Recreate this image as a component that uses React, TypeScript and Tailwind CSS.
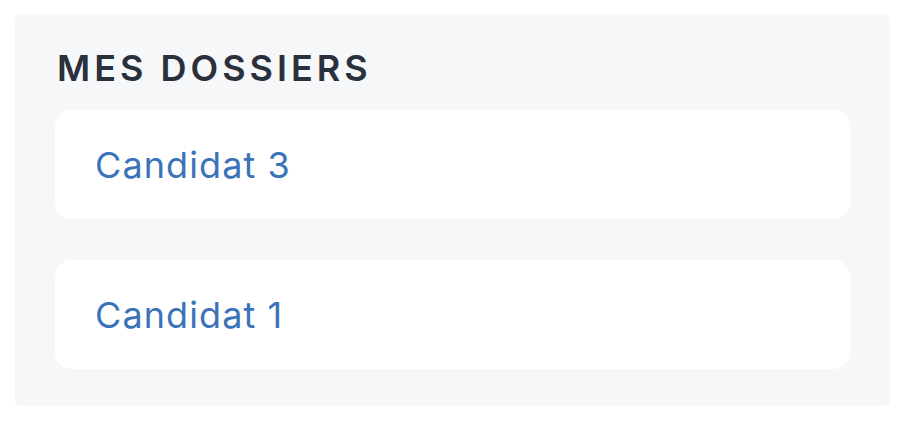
const dossiers = ["Candidat 3", "Candidat 1"];

export default function App() {
  return (
    <div className="min-h-screen bg-white pl-[15px] pt-[14px]" style={{ fontFamily: "Inter, 'Noto Sans', sans-serif" }}>
      <div className="flex w-[875px] flex-col rounded-[6px] bg-[#f6f7f9] px-[40px] pb-[37px] pt-[26px]">
        <h2 className="mb-[14px] pl-[2px] text-[36px] font-semibold uppercase leading-[56px] tracking-[4px] text-[#2b303d]">
          Mes dossiers
        </h2>
        <div className="flex flex-col gap-[41px]">
          {dossiers.map((name) => (
            <a
              key={name}
              href="#"
              className="flex h-[109px] items-center rounded-[16px] bg-white px-[40px] text-[36px] font-normal tracking-[1.1px] text-[#3b73b9]"
            >
              {name}
            </a>
          ))}
        </div>
      </div>
    </div>
  );
}
